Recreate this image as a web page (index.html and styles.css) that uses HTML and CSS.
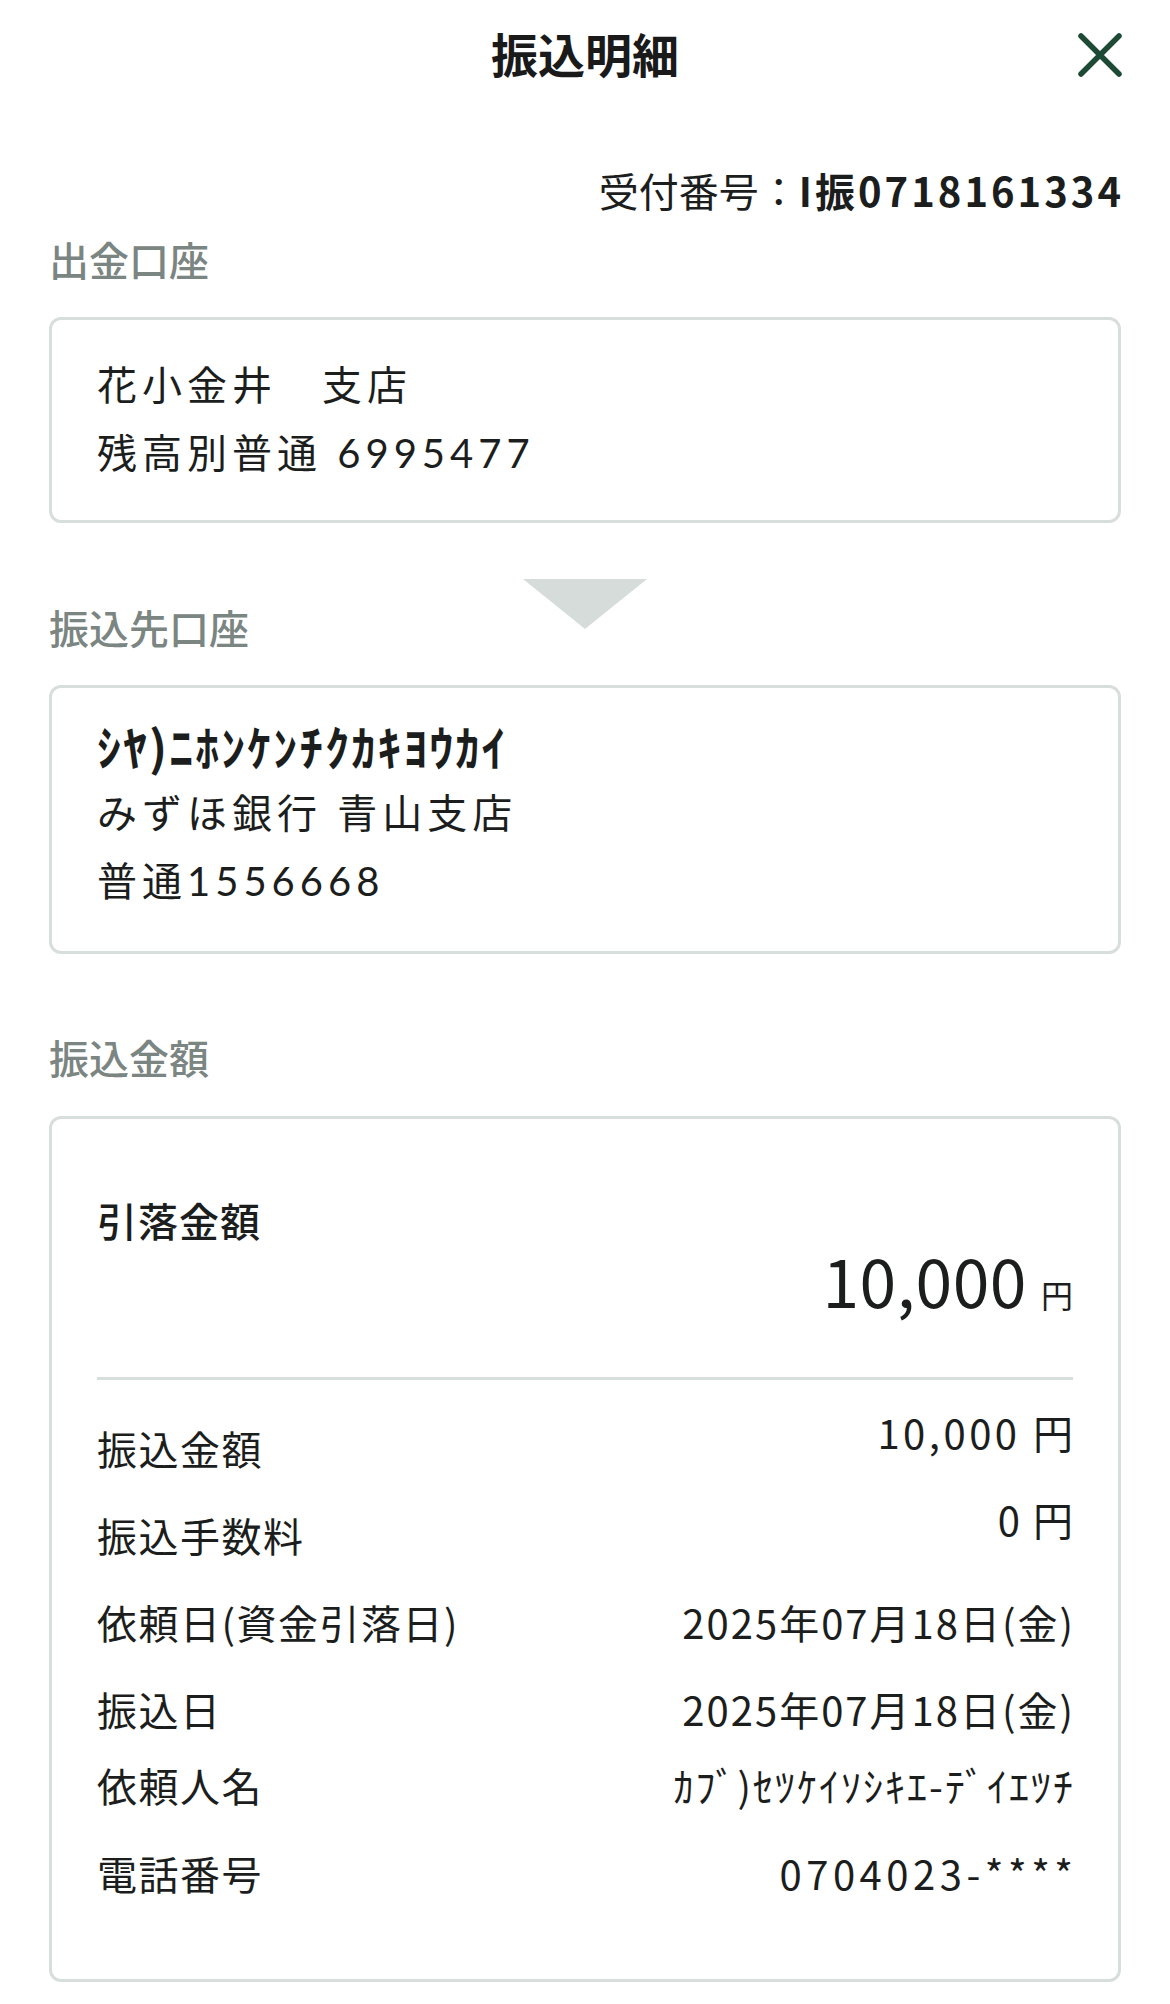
FILE: index.html
```html
<!DOCTYPE html>
<html lang="ja">
<head>
<meta charset="utf-8">
<title>振込明細</title>
<link rel="stylesheet" href="styles.css">
</head>
<body>
<div class="screen">
  <header class="topbar">
    <h1 class="title">振込明細</h1>
    <button class="close" aria-label="閉じる">
      <svg viewBox="0 0 48 48" width="48" height="48" aria-hidden="true">
        <path d="M5 5 L43 43 M43 5 L5 43" fill="none" stroke="#1d4a35" stroke-width="5.5" stroke-linecap="round"/>
      </svg>
    </button>
  </header>

  <main class="content">
    <p class="receipt">受付番号：<b class="receipt-no">I振0718161334</b></p>

    <section class="section">
      <h2 class="sec-label">出金口座</h2>
      <div class="card card-from">
        <p class="card-line">花小金井　支店</p>
        <p class="card-line">残高別普通 6995477</p>
      </div>
    </section>

    <div class="arrow" aria-hidden="true"></div>

    <section class="section section-to">
      <h2 class="sec-label">振込先口座</h2>
      <div class="card card-to">
        <p class="card-line card-name">ｼﾔ)ﾆﾎﾝｹﾝﾁｸｶｷﾖｳｶｲ</p>
        <p class="card-line">みずほ銀行 青山支店</p>
        <p class="card-line">普通1556668</p>
      </div>
    </section>

    <section class="section section-amount">
      <h2 class="sec-label">振込金額</h2>
      <div class="card card-amount">
        <p class="total-label">引落金額</p>
        <p class="total-value"><span class="total-num">10,000</span><span class="total-yen">円</span></p>
        <hr class="divider">
        <dl class="rows">
          <div class="row row-raised">
            <dt class="row-label">振込金額</dt>
            <dd class="row-value row-value-wide">10,000 円</dd>
          </div>
          <div class="row row-raised">
            <dt class="row-label">振込手数料</dt>
            <dd class="row-value">0 円</dd>
          </div>
          <div class="row">
            <dt class="row-label">依頼日(資金引落日)</dt>
            <dd class="row-value">2025年07月18日(金)</dd>
          </div>
          <div class="row">
            <dt class="row-label">振込日</dt>
            <dd class="row-value">2025年07月18日(金)</dd>
          </div>
          <div class="row row-short">
            <dt class="row-label">依頼人名</dt>
            <dd class="row-value">ｶﾌﾞ)ｾﾂｹｲｿｼｷｴ-ﾃﾞｲｴﾂﾁ</dd>
          </div>
          <div class="row row-last">
            <dt class="row-label">電話番号</dt>
            <dd class="row-value row-value-phone">0704023-****</dd>
          </div>
        </dl>
      </div>
    </section>
  </main>
</div>
</body>
</html>
```

FILE: styles.css
```css
* {
  box-sizing: border-box;
}

html, body {
  margin: 0;
  padding: 0;
  background: #ffffff;
}

body {
  font-family: "Noto Sans CJK JP", "Noto Sans", sans-serif;
  color: #1c1e1d;
}

.screen {
  width: 1170px;
  min-height: 2004px;
  background: #ffffff;
}

/* ---------- top bar ---------- */
.topbar {
  height: 104px;
  display: grid;
  grid-template-columns: 1fr auto 1fr;
  align-items: center;
  padding: 0 49px 0 49px;
}

.title {
  grid-column: 2;
  margin: 0;
  font-size: 47px;
  font-weight: 700;
  line-height: 1;
  color: #1a1a1a;
  letter-spacing: 0;
}

.close {
  grid-column: 3;
  justify-self: end;
  width: 48px;
  height: 48px;
  padding: 0;
  margin: 6px -3px 0 0;
  border: 0;
  background: transparent;
  display: flex;
  align-items: center;
  justify-content: center;
}

.close svg {
  display: block;
}

/* ---------- content ---------- */
.content {
  padding: 0 49px;
}

.receipt {
  margin: 58px 0 0 0;
  text-align: right;
  font-size: 40px;
  line-height: 56px;
  color: #1c1e1d;
}

.receipt-no {
  font-weight: 700;
  letter-spacing: 3px;
  margin-right: -3px;
}

.section {
  display: flex;
  flex-direction: column;
}

.sec-label {
  margin: 13px 0 0 0;
  font-size: 40px;
  line-height: 56px;
  font-weight: 500;
  color: #7b8581;
  letter-spacing: 0;
}

.card {
  margin-top: 30px;
  border: 3px solid #d8dedc;
  border-radius: 12px;
  background: #ffffff;
  padding: 0 45px;
}

.card-line {
  margin: 0;
  font-family: "Lato", "Noto Sans CJK JP", sans-serif;
  font-size: 40px;
  line-height: 68px;
  letter-spacing: 5px;
  color: #1c1e1d;
}

.card-from {
  padding-top: 31px;
  padding-bottom: 33px;
}

/* arrow between accounts */
.arrow {
  width: 124px;
  height: 50px;
  margin: 56px auto 0 auto;
  background: #d6dcda;
  clip-path: polygon(0 0, 100% 0, 50% 100%);
}

.section-to .sec-label {
  margin-top: -30px;
}

.card-to {
  padding-top: 23px;
  padding-bottom: 36px;
}

.card-name {
  font-family: "Noto Sans CJK JP", sans-serif;
  font-size: 48px;
  font-weight: 700;
  letter-spacing: 2px;
}

.section-amount .sec-label {
  margin-top: 75px;
}

.card-amount {
  margin-top: 31px;
  padding-top: 73px;
  padding-bottom: 63px;
}

.total-label {
  margin: 0;
  font-size: 40px;
  line-height: 56px;
  font-weight: 500;
  letter-spacing: 1px;
  color: #1c1e1d;
}

.total-value {
  margin: 1px 0 0 0;
  text-align: right;
  line-height: 60px;
  font-size: 66px;
  color: #1c1e1d;
}

.total-num {
  font-size: 66px;
  font-weight: 400;
  letter-spacing: 0.5px;
}

.total-yen {
  font-size: 32px;
  line-height: 1;
  margin-left: 14px;
}

.divider {
  margin: 67px 0 0 0;
  border: 0;
  height: 3px;
  background: #d8dedc;
}

.rows {
  margin: 24px 0 0 0;
  padding: 0;
}

.row {
  height: 87px;
  display: flex;
  justify-content: space-between;
  align-items: center;
}

.row-short {
  height: 66px;
}

.row-last {
  margin-top: 11px;
}

.row-label {
  margin: 0;
  font-size: 40px;
  line-height: 56px;
  letter-spacing: 1.5px;
  color: #1c1e1d;
  white-space: nowrap;
}

.row-value {
  margin: 0 -2px 0 0;
  font-size: 40px;
  line-height: 56px;
  letter-spacing: 2px;
  color: #1c1e1d;
  text-align: right;
  white-space: nowrap;
}

.row-value-wide {
  letter-spacing: 3.5px;
  margin-right: -3.5px;
}

.row-value-phone {
  letter-spacing: 4.5px;
  margin-right: -4.5px;
}

.row-raised .row-value {
  align-self: flex-start;
}
```
